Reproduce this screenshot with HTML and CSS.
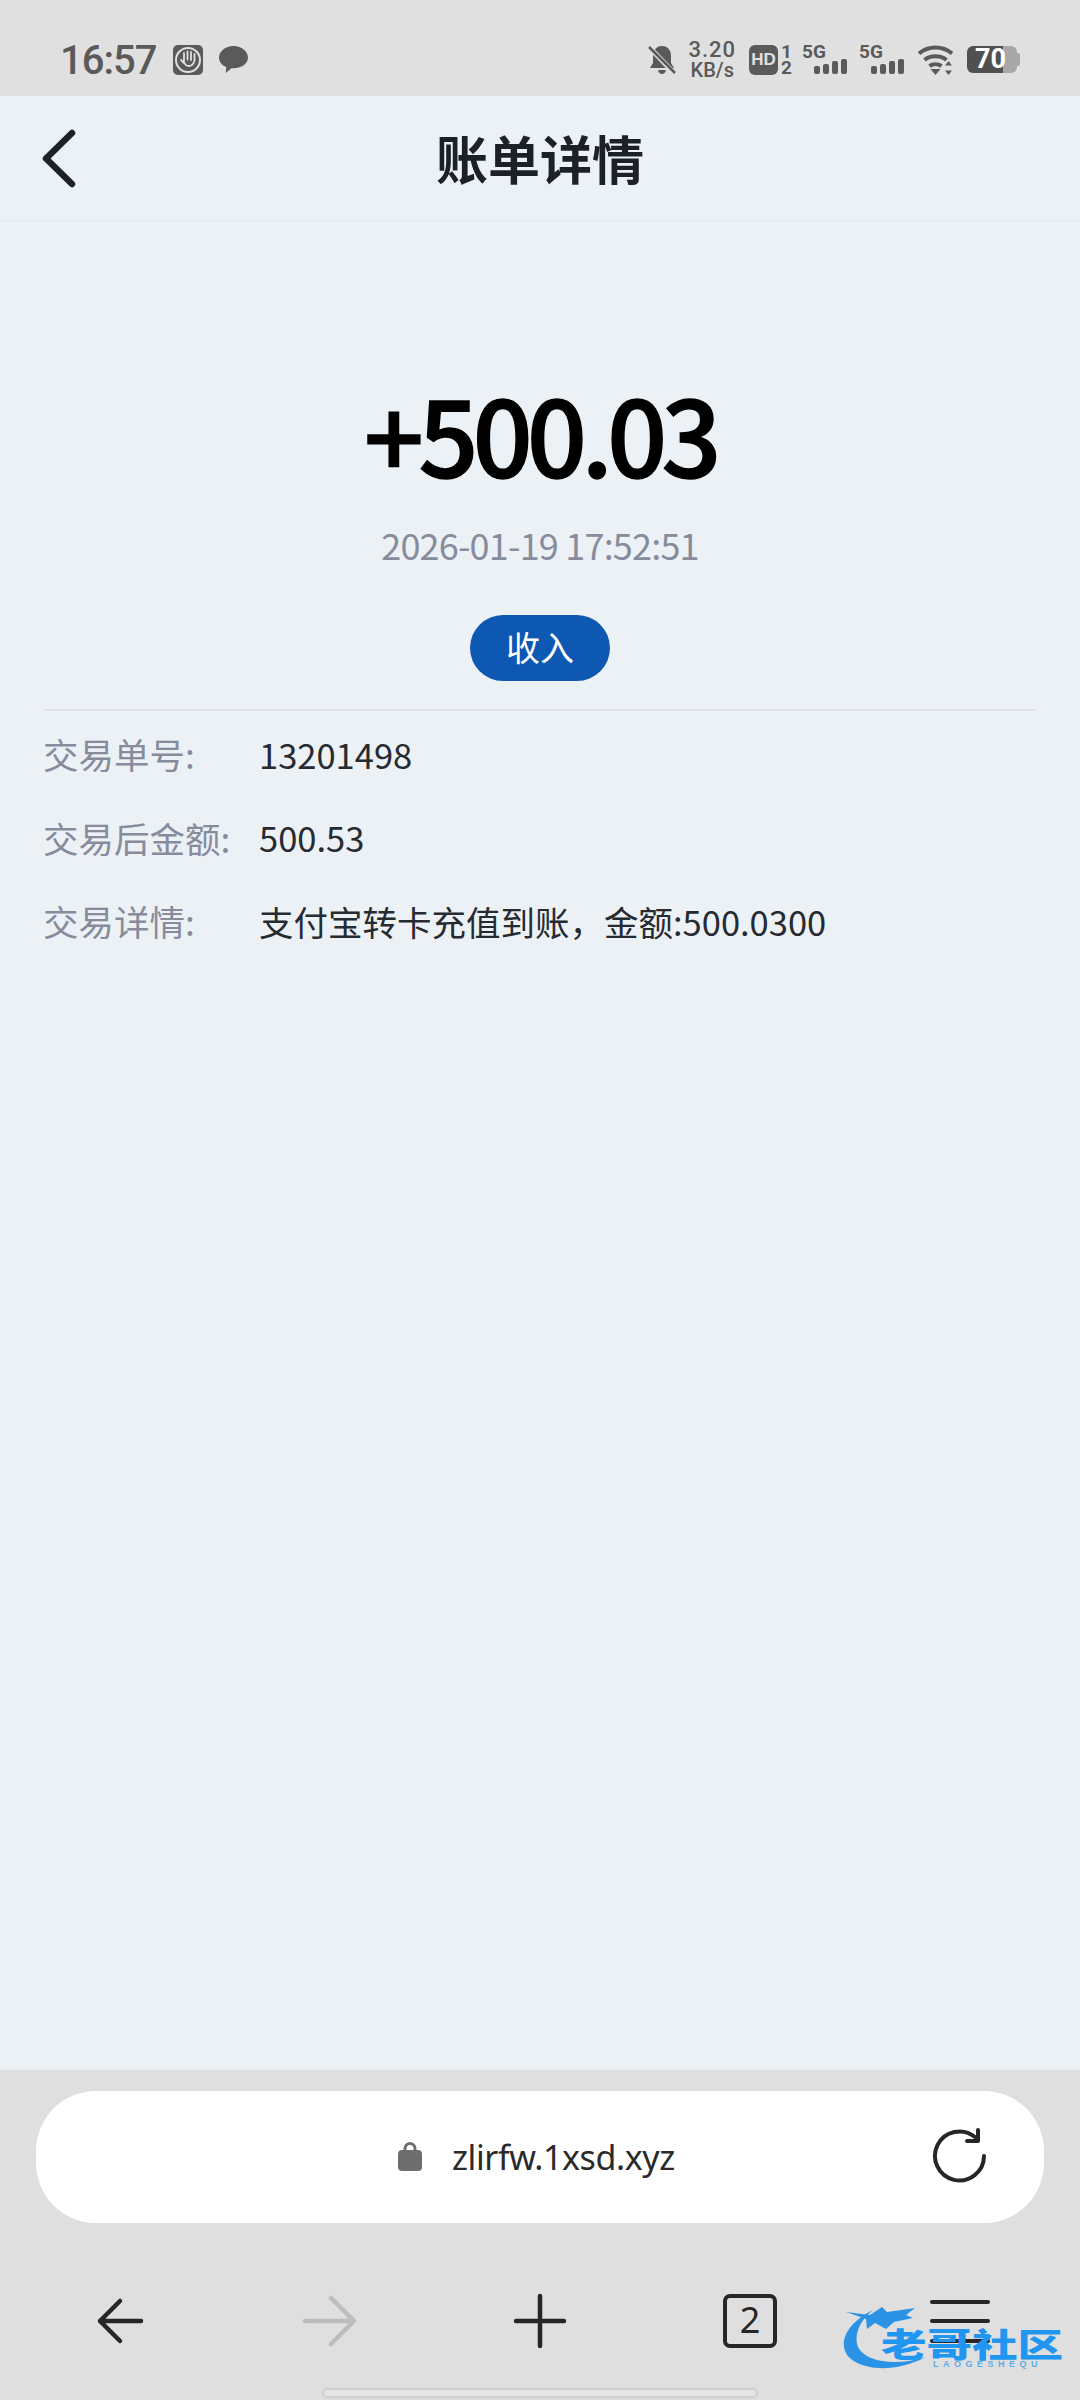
FILE: index.html
```html
<!DOCTYPE html>
<html lang="zh-CN">
<head>
    <meta charset="UTF-8">
    <meta name="viewport" content="width=device-width, initial-scale=1.0">
    <title>账单详情</title>
    <link rel="stylesheet" href="styles.css">
</head>
<body>
    <div class="phone">
        <div class="status-bar">
            <div class="status-left">
                <span class="clock">16:57</span>
                <svg class="icon-hand" width="30" height="30" viewBox="0 0 30 30">
                    <rect width="30" height="30" rx="5" fill="#5a5a5a"/>
                    <circle cx="15" cy="15" r="12" fill="none" stroke="#e0e0e0" stroke-width="2"/>
                    <path d="M8 15l3 3M11 8v8M14.5 6.500v8M18 7v8M21.500 9v7M11 17c1 3 3 4 5 4s4-1 5.500-5" fill="none" stroke="#e0e0e0" stroke-width="1.800" stroke-linecap="round"/>
                </svg>
                <svg class="icon-chat" width="31" height="29" viewBox="0 0 32 30">
                    <path d="M16 1C7.500 1 1 6.500 1 13c0 4.500 3 8 7.500 10l-.5 6 6-5h2c8.500 0 15-4.500 15-11S24.500 1 16 1z" fill="#5a5a5a"/>
                </svg>
            </div>
            <div class="status-right">
                <svg class="icon-bell" width="28" height="30" viewBox="0 0 28 30">
                    <path d="M14 1c-6 0-9 4.500-9 10v7l-3 5h24l-3-5v-7c0-5.500-3-10-9-10zM10 25c.5 2.500 2 4 4 4s3.500-1.500 4-4z" fill="#5a5a5a"/>
                    <path d="M1 2l26 27" stroke="#e0e0e0" stroke-width="5"/>
                    <path d="M1 2l26 26" stroke="#5a5a5a" stroke-width="2.500"/>
                </svg>
                <div class="net-speed"><span>3.20</span><span>KB/s</span></div>
                <div class="hd-group">
                    <span class="hd-box">HD</span>
                    <div class="hd-nums"><span>1</span><span>2</span></div>
                </div>
                <div class="signal">
                    <span class="signal-label">5G</span>
                    <div class="signal-bars"><i class="b1"></i><i class="b2"></i><i class="b3"></i><i class="b4"></i></div>
                </div>
                <div class="signal">
                    <span class="signal-label">5G</span>
                    <div class="signal-bars"><i class="b1"></i><i class="b2"></i><i class="b3"></i><i class="b4"></i></div>
                </div>
                <svg class="icon-wifi" width="38" height="30" viewBox="0 0 38 30">
                    <path d="M2 8.500c9.500-8 23.500-8 33 0M7.500 15c6-5 16-5 22 0M12.500 21c3.500-2.500 8.500-2.500 12 0" fill="none" stroke="#5a5a5a" stroke-width="4"/>
                    <path d="M13.500 24h10l-5 6z" fill="#5a5a5a"/>
                    <path d="M31.500 16l3.500 4.500h-7zM31.500 30l3.500-4.500h-7z" fill="#5a5a5a"/>
                </svg>
                <div class="battery"><span class="battery-num">70</span></div>
            </div>
        </div>

        <div class="header">
            <svg class="header-back" width="36" height="60" viewBox="0 0 36 60">
                <path d="M31 4L5 29.500 31 55" fill="none" stroke="#1c2128" stroke-width="6.500" stroke-linecap="round" stroke-linejoin="round"/>
            </svg>
            <h1 class="header-title">账单详情</h1>
        </div>

        <div class="content">
            <div class="summary">
                <div class="amount">+500.03</div>
                <div class="time">2026-01-19 17:52:51</div>
                <span class="tag">收入</span>
            </div>
            <div class="detail">
                <div class="row">
                    <span class="row-label">交易单号:</span>
                    <span class="row-value">13201498</span>
                </div>
                <div class="row">
                    <span class="row-label">交易后金额:</span>
                    <span class="row-value">500.53</span>
                </div>
                <div class="row">
                    <span class="row-label">交易详情:</span>
                    <span class="row-value">支付宝转卡充值到账，金额:500.0300</span>
                </div>
            </div>
        </div>

        <div class="browser-bar">
            <div class="url-bar">
                <svg class="icon-lock" width="24" height="30" viewBox="0 0 24 30">
                    <path d="M7 11V7.500a5 5 0 0 1 10 0V11" fill="none" stroke="#6e6e6e" stroke-width="3"/>
                    <rect y="9" width="24" height="21" rx="4" fill="#6e6e6e"/>
                </svg>
                <span class="url-text">zlirfw.1xsd.xyz</span>
                <svg class="icon-refresh" width="56" height="56" viewBox="0 0 56 56">
                    <path d="M52 28a24.500 24.500 0 1 1-9-19" fill="none" stroke="#262626" stroke-width="4" stroke-linecap="round"/>
                    <path d="M46 2v11H35" fill="none" stroke="#262626" stroke-width="4" stroke-linecap="round" stroke-linejoin="round"/>
                </svg>
            </div>
            <div class="nav">
                <div class="nav-item">
                    <svg width="48" height="48" viewBox="0 0 48 48">
                        <path d="M45 24H4M24 4L4 24l20 20" fill="none" stroke="#262626" stroke-width="4.500" stroke-linecap="round" stroke-linejoin="round"/>
                    </svg>
                </div>
                <div class="nav-item">
                    <svg width="56" height="52" viewBox="0 0 56 52">
                        <path d="M3 26h49M29 3l23 23-23 23" fill="none" stroke="#bdbdbd" stroke-width="4.500" stroke-linecap="round" stroke-linejoin="round"/>
                    </svg>
                </div>
                <div class="nav-item">
                    <svg width="56" height="56" viewBox="0 0 56 56">
                        <path d="M4 28h48M28 3v50" fill="none" stroke="#262626" stroke-width="4.500" stroke-linecap="round"/>
                    </svg>
                </div>
                <div class="nav-item">
                    <span class="tab-count">2</span>
                </div>
                <div class="nav-item">
                    <div class="menu-lines"><i></i><i></i><i></i></div>
                </div>
            </div>
            <div class="home-indicator"></div>
            <div class="watermark">
                <svg class="watermark-logo" width="100" height="68" viewBox="0 0 100 68">
                    <path d="M30 5C8 16-3 32 2 46c6 16 42 26 81 6-28 9-60 6-68-10-4-10 0-25 15-37z" fill="#2b93e6"/>
                    <path d="M3 7l24 3 12-8 5 5 14-2 14-2-9 7 7 3-19 4-8 7-11-6-8 6-1-10z" fill="#2b93e6"/>
                </svg>
                <span class="watermark-name">老哥社区</span>
                <span class="watermark-sub">LAOGESHEQU</span>
            </div>
        </div>
    </div>
</body>
</html>
```

FILE: styles.css
```css
:root {
    --page-bg: #ecf1f5;
    --chrome-bg: #e0e0e0;
    --status-color: #5a5a5a;
    --muted: #878c9c;
    --dark: #262a31;
    --blue: #0d58b3;
}

* {
    box-sizing: border-box;
}

body {
    margin: 0;
    font-family: "Noto Sans CJK SC", "Noto Sans", sans-serif;
    background-color: var(--page-bg);
}

.phone {
    width: 1080px;
    height: 2400px;
    display: flex;
    flex-direction: column;
    overflow: hidden;
}

/* status bar */
.status-bar {
    height: 96px;
    flex-shrink: 0;
    background-color: var(--chrome-bg);
    color: var(--status-color);
    display: flex;
    justify-content: space-between;
    align-items: center;
    padding: 23px 60px 0 60px;
}

.status-left,
.status-right {
    display: flex;
    align-items: center;
}

.clock {
    font-family: Roboto, sans-serif;
    font-size: 40px;
    font-weight: 500;
    letter-spacing: -1px;
    line-height: 1;
    padding-top: 2px;
}

.icon-hand {
    margin-left: 17px;
}

.icon-chat {
    margin-left: 15px;
}

.net-speed {
    display: flex;
    flex-direction: column;
    align-items: center;
    margin-left: 12px;
    font-family: Roboto, sans-serif;
    font-size: 20px;
    line-height: 21px;
    font-weight: 500;
}

.net-speed span:first-child {
    font-size: 22px;
    letter-spacing: 1px;
}

.hd-group {
    display: flex;
    align-items: center;
    margin-left: 13px;
}

.hd-box {
    width: 29px;
    height: 30px;
    border-radius: 6px;
    background-color: var(--status-color);
    color: var(--chrome-bg);
    font-family: "Liberation Sans", sans-serif;
    font-size: 17px;
    font-weight: 700;
    line-height: 30px;
    text-align: center;
}

.hd-nums {
    display: flex;
    flex-direction: column;
    margin-left: 3px;
    font-family: Roboto, sans-serif;
    font-size: 19px;
    font-weight: 700;
    line-height: 16px;
}

.signal {
    width: 45px;
    height: 29px;
    margin-left: 10px;
    display: flex;
    flex-direction: column;
}

.signal + .signal {
    margin-left: 12px;
}

.signal-label {
    height: 14px;
    font-family: Roboto, sans-serif;
    font-size: 19px;
    font-weight: 700;
    line-height: 14px;
}

.signal-bars {
    display: flex;
    align-items: flex-end;
    justify-content: flex-end;
    gap: 3px;
    height: 15px;
}

.signal-bars i {
    width: 6px;
    border-radius: 2px;
    background-color: var(--status-color);
}

.signal-bars .b1 { height: 8px; }
.signal-bars .b2 { height: 10px; }
.signal-bars .b3 { height: 13px; }
.signal-bars .b4 { height: 15px; }

.icon-wifi {
    margin-left: 13px;
}

.battery {
    position: relative;
    width: 50px;
    height: 27px;
    margin-left: 12px;
    margin-right: 3px;
    border-radius: 6px;
    background: linear-gradient(to right, #505050 0 72%, #a8a8a8 72% 100%);
    display: flex;
    align-items: center;
    justify-content: center;
}

.battery::after {
    content: "";
    position: absolute;
    right: -3px;
    top: 7px;
    width: 3px;
    height: 13px;
    border-radius: 0 2px 2px 0;
    background-color: #a8a8a8;
}

.battery-num {
    color: #fff;
    font-family: Roboto, sans-serif;
    font-size: 27px;
    font-weight: 700;
    line-height: 1;
    padding-right: 3px;
}

.icon-bell,
.icon-wifi,
.icon-hand,
.icon-chat {
    flex-shrink: 0;
}

/* header */
.header {
    height: 126px;
    flex-shrink: 0;
    position: relative;
    display: flex;
    align-items: center;
    justify-content: center;
    border-bottom: 2px solid #e8edf1;
}

.header-back {
    position: absolute;
    left: 41px;
    top: 33px;
}

.header-title {
    margin: 0;
    font-size: 52px;
    font-weight: 700;
    line-height: 1;
    color: #1c2128;
}

/* content */
.content {
    flex: 1;
    padding: 0 43px;
}

.summary {
    display: flex;
    flex-direction: column;
    align-items: center;
    padding-top: 145px;
    height: 489px;
    border-bottom: 2px solid #dfe3e7;
}

.amount {
    font-size: 105px;
    font-weight: 500;
    line-height: 130px;
    color: #000;
    letter-spacing: -5.500px;
    -webkit-text-stroke: 1.500px #000;
}

.time {
    margin-top: 23px;
    font-size: 36px;
    line-height: 48px;
    letter-spacing: -.8px;
    color: var(--muted);
}

.tag {
    margin-top: 47px;
    width: 140px;
    height: 66px;
    border-radius: 33px;
    background-color: var(--blue);
    color: #fff;
    font-size: 34px;
    line-height: 64px;
    text-align: center;
}

.detail {
    padding-top: 1px;
}

.row {
    display: flex;
    align-items: center;
    height: 83.500px;
    font-size: 34.500px;
}

.row-label {
    width: 216px;
    font-size: 35.500px;
    color: var(--muted);
}

.row-value {
    color: var(--dark);
}

/* browser chrome */
.browser-bar {
    height: 330px;
    flex-shrink: 0;
    position: relative;
    background-color: #dfdfdf;
    padding-top: 21px;
}

.url-bar {
    width: 1008px;
    height: 132px;
    margin-left: 36px;
    border-radius: 60px;
    background-color: #fff;
    display: flex;
    align-items: center;
    padding: 0 56px 0 362px;
}

.icon-lock {
    margin-top: -2px;
}

.url-text {
    margin-left: 30px;
    font-family: "Noto Sans", sans-serif;
    font-size: 34px;
    letter-spacing: -.4px;
    color: #2a2a2a;
}

.icon-refresh {
    margin-left: auto;
    margin-top: -2px;
}

.nav {
    display: flex;
    padding: 0 15px;
    height: 56px;
    margin-top: 70px;
}

.nav-item {
    width: 210px;
    display: flex;
    align-items: center;
    justify-content: center;
}

.tab-count {
    width: 54px;
    height: 54px;
    border: 4px solid #262626;
    border-radius: 7px;
    font-family: "Noto Sans", sans-serif;
    font-size: 36px;
    line-height: 44px;
    text-align: center;
    color: #262626;
}

.menu-lines {
    width: 60px;
    display: flex;
    flex-direction: column;
    gap: 15.500px;
}

.menu-lines i {
    height: 4px;
    border-radius: 2px;
    background-color: #262626;
}

.home-indicator {
    position: absolute;
    left: 322px;
    bottom: 2px;
    width: 436px;
    height: 10px;
    border: 2px solid #cfcfcf;
    border-radius: 5px;
    background-color: #e6e6e6;
}

/* watermark sits over the nav icons */
.watermark {
    position: absolute;
    left: 843px;
    top: 235px;
    width: 220px;
    height: 68px;
}

.watermark-logo {
    position: absolute;
    left: 0;
    top: 0;
}

.watermark-name {
    position: absolute;
    left: 38px;
    top: 23px;
    font-size: 33px;
    font-weight: 900;
    line-height: 30px;
    white-space: nowrap;
    color: #2196f0;
    transform: scaleX(1.38);
    transform-origin: left center;
}

.watermark-sub {
    position: absolute;
    left: 90px;
    top: 54px;
    font-family: "Liberation Sans", sans-serif;
    font-size: 9px;
    line-height: 10px;
    font-weight: 700;
    letter-spacing: 4.500px;
    color: #5aaee8;
}
```
